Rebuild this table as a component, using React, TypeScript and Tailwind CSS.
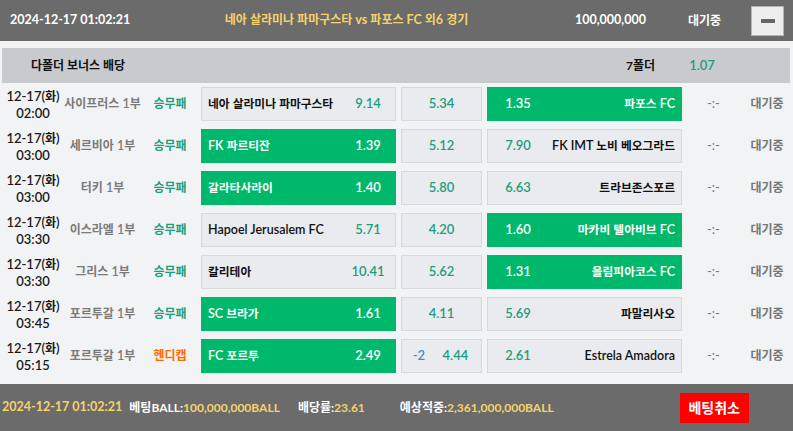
import React from "react";

type Row = {
  date: string;
  time: string;
  league: string;
  type: string;
  hcap?: boolean;
  home: string;
  homeOdds: string;
  homeSel?: boolean;
  draw: string;
  hval?: string;
  away: string;
  awayOdds: string;
  awaySel?: boolean;
};

const rows: Row[] = [
  { date: "12-17(화)", time: "02:00", league: "사이프러스 1부", type: "승무패", home: "네아 살라미나 파마구스타", homeOdds: "9.14", draw: "5.34", away: "파포스 FC", awayOdds: "1.35", awaySel: true },
  { date: "12-17(화)", time: "03:00", league: "세르비아 1부", type: "승무패", home: "FK 파르티잔", homeOdds: "1.39", homeSel: true, draw: "5.12", away: "FK IMT 노비 베오그라드", awayOdds: "7.90" },
  { date: "12-17(화)", time: "03:00", league: "터키 1부", type: "승무패", home: "갈라타사라이", homeOdds: "1.40", homeSel: true, draw: "5.80", away: "트라브존스포르", awayOdds: "6.63" },
  { date: "12-17(화)", time: "03:30", league: "이스라엘 1부", type: "승무패", home: "Hapoel Jerusalem FC", homeOdds: "5.71", draw: "4.20", away: "마카비 텔아비브 FC", awayOdds: "1.60", awaySel: true },
  { date: "12-17(화)", time: "03:30", league: "그리스 1부", type: "승무패", home: "칼리테아", homeOdds: "10.41", draw: "5.62", away: "올림피아코스 FC", awayOdds: "1.31", awaySel: true },
  { date: "12-17(화)", time: "03:45", league: "포르투갈 1부", type: "승무패", home: "SC 브라가", homeOdds: "1.61", homeSel: true, draw: "4.11", away: "파말리사오", awayOdds: "5.69" },
  { date: "12-17(화)", time: "05:15", league: "포르투갈 1부", type: "헨디캡", hcap: true, home: "FC 포르투", homeOdds: "2.49", homeSel: true, draw: "4.44", hval: "-2", away: "Estrela Amadora", awayOdds: "2.61" },
];

const font = { fontFamily: '"Lato", "Noto Sans CJK KR", sans-serif' };

const HANGUL = /([\uAC00-\uD7A3\u3131-\u318E]+)/;

function Mix({ text, small }: { text: string; small?: boolean }) {
  const parts = text.split(HANGUL);
  return (
    <span>
      {parts.map((p, i) =>
        i % 2 === 1 ? (
          <span key={i} className={small ? "text-[11.75px]" : "text-[12px]"}>{p}</span>
        ) : (
          <span key={i}>{p}</span>
        )
      )}
    </span>
  );
}

export default function App() {
  return (
    <div className="w-[793px] h-[431px] bg-[#f2f3f5] flex flex-col overflow-hidden text-[12px]" style={font}>
      {/* header */}
      <div className="h-[41px] bg-[#6b6b6b] flex items-center font-bold">
        <div className="pl-[10px] w-[200px] text-white text-[12.5px]">2024-12-17 01:02:21</div>
        <div className="w-[300px] pr-[7px] text-[#f7d269] text-center text-[12.5px] whitespace-nowrap">
          <Mix text="네아 살라미나 파마구스타 vs 파포스 FC 외6 경기" />
        </div>
        <div className="w-[146px] text-white text-right text-[12.5px]">100,000,000</div>
        <div className="w-[75px] text-white text-right">대기중</div>
        <div className="ml-[30px] w-[33px] h-[30px] bg-[#eeeeee] border border-[#b5b5b5] flex items-center justify-center">
          <div className="w-[14px] h-[4px] bg-[#666666]"></div>
        </div>
      </div>

      {/* bonus row */}
      <div className="mt-[7px] mx-[2px] w-[788px] h-[35px] bg-[#c8cacd] flex items-center font-bold text-[#111]">
        <div className="pl-[29px] w-[580px]">다폴더 보너스 배당</div>
        <div className="w-[100px] text-center pl-[17px]">7폴더</div>
        <div className="w-[40px] text-center text-[#1c9e7c] font-semibold text-[13px]">1.07</div>
      </div>

      {/* rows */}
      <div className="pt-[4px] flex flex-col">
        {rows.map((r, i) => (
          <div key={i} className="h-[42px] flex items-start">
            <div className="w-[66px] h-[34px] flex flex-col items-center justify-center leading-[16px] font-semibold text-[#1a1a1a] text-[13px]">
              <span>
                12-17(<span className="text-[12px]">화</span>)
              </span>
              <span>{r.time}</span>
            </div>
            <div className="w-[73px] h-[34px] flex items-center justify-center text-[#7a7a7a] font-semibold whitespace-nowrap text-[12.5px]">
              <Mix text={r.league} />
            </div>
            <div className={`w-[62px] h-[34px] flex items-center justify-center font-semibold ${r.hcap ? "text-[#ff6a00]" : "text-[#1c9e7c]"}`}>{r.type}</div>
            <div className={`w-[195px] h-[34px] flex items-center border font-semibold text-[12.5px] ${r.homeSel ? "bg-[#00b86b] border-[#00b86b] text-white" : "bg-[#e9ebee] border-[#d6d8db] text-[#111]"}`}>
              <span className="pl-[6px] flex-1 whitespace-nowrap">
                <Mix text={r.home} small />
              </span>
              <span className={`w-[50px] pr-[4px] text-center text-[13px] ${r.homeSel ? "text-white" : "text-[#1c9e7c]"}`}>{r.homeOdds}</span>
            </div>
            <div className="ml-[5px] w-[81px] h-[34px] flex items-center justify-center bg-[#e9ebee] border border-[#d6d8db] text-[13px] font-semibold text-[#1c9e7c]">
              {r.hval ? (
                <div className="flex w-full justify-around pl-[2px] pr-[4px]">
                  <span className="text-[#3a8fd0]">{r.hval}</span>
                  <span>{r.draw}</span>
                </div>
              ) : (
                <span>{r.draw}</span>
              )}
            </div>
            <div className={`ml-[5px] w-[195px] h-[34px] flex items-center border font-semibold text-[12.5px] ${r.awaySel ? "bg-[#00b86b] border-[#00b86b] text-white" : "bg-[#e9ebee] border-[#d6d8db] text-[#111]"}`}>
              <span className={`w-[60px] text-center text-[13px] ${r.awaySel ? "text-white" : "text-[#1c9e7c]"}`}>{r.awayOdds}</span>
              <span className="flex-1 text-right pr-[6px] whitespace-nowrap">
                <Mix text={r.away} small />
              </span>
            </div>
            <div className="w-[63px] h-[34px] flex items-center justify-center text-[#777] text-[13px]">-:-</div>
            <div className="w-[44px] h-[34px] flex items-center justify-center text-[#777] font-semibold">대기중</div>
          </div>
        ))}
      </div>

      {/* footer */}
      <div className="mt-auto h-[47px] bg-[#6b6b6b] flex items-center font-bold text-[12px]">
        <span className="pl-[2px] text-[#f7d269] text-[12.5px]">2024-12-17 01:02:21</span>
        <span className="ml-[7px] text-white">
          <span className="text-[12px]">베팅</span>BALL:
        </span>
        <span className="text-[#f7d269]">100,000,000BALL</span>
        <span className="ml-[18px] text-white">배당률:</span>
        <span className="text-[#f7d269]">23.61</span>
        <span className="ml-[35px] text-white">예상적중:</span>
        <span className="text-[#f7d269]">2,361,000,000BALL</span>
        <div className="ml-[126px] w-[69px] h-[30px] bg-[#ff0000] text-white flex items-center justify-center text-[14px] font-semibold">베팅취소</div>
      </div>
    </div>
  );
}
